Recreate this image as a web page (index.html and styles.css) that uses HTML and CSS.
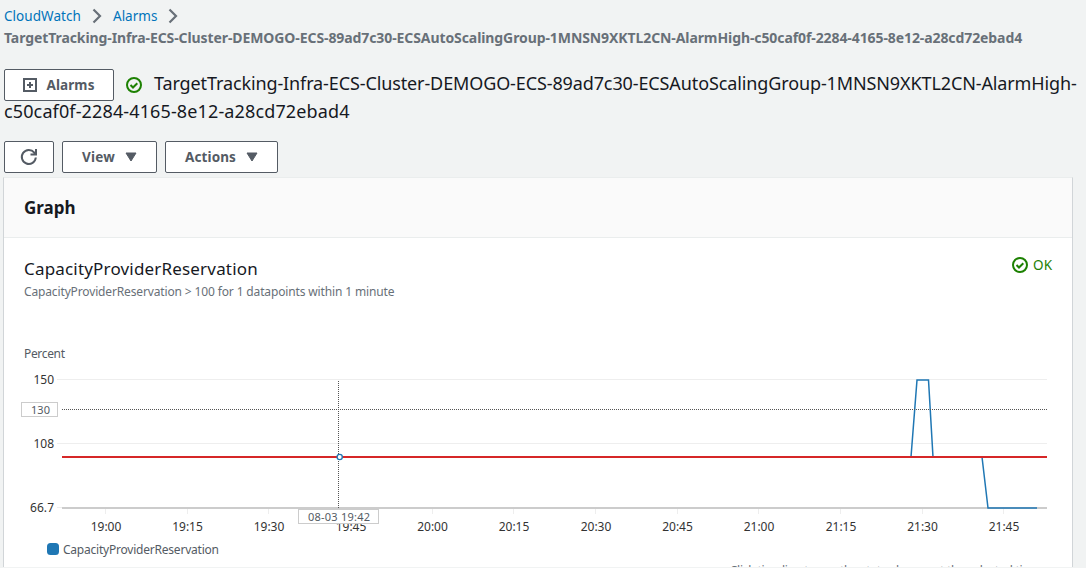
FILE: index.html
```html
<!DOCTYPE html>
<html lang="en">
<head>
<meta charset="utf-8">
<title>CloudWatch Alarms</title>
<link rel="stylesheet" href="styles.css">
</head>
<body>
<main class="page">
  <nav class="breadcrumb">
    <div class="crumbs">
      <a class="crumb crumb-service">CloudWatch</a>
      <svg class="chevron" width="10" height="16" viewBox="0 0 10 16"><path d="M1.500 1.500 8 8l-6.500 6.500"/></svg>
      <a class="crumb crumb-alarms">Alarms</a>
      <svg class="chevron" width="10" height="16" viewBox="0 0 10 16"><path d="M1.500 1.500 8 8l-6.500 6.500"/></svg>
    </div>
    <div><span class="current">TargetTracking-Infra-ECS-Cluster-DEMOGO-ECS-89ad7c30-ECSAutoScalingGroup-1MNSN9XKTL2CN-AlarmHigh-c50caf0f-2284-4165-8e12-a28cd72ebad4</span></div>
  </nav>

  <header class="heading">
    <div class="heading-row">
      <button class="button alarms-button">
        <svg width="14" height="14" viewBox="0 0 14 14"><path class="stroke" d="M1 1h12v12H1zM7 4v6M4 7h6"/></svg>
        <span class="label-alarms">Alarms</span>
      </button>
      <svg class="ok-icon" width="16" height="16" viewBox="0 0 16 16"><circle cx="8" cy="8" r="7"/><path d="m4.500 8 2.500 2.500 4.300-4.300"/></svg>
      <span class="title title-first">TargetTracking-Infra-ECS-Cluster-DEMOGO-ECS-89ad7c30-ECSAutoScalingGroup-1MNSN9XKTL2CN-AlarmHigh-</span>
    </div>
    <div class="heading-rest"><span class="title title-rest">c50caf0f-2284-4165-8e12-a28cd72ebad4</span></div>
  </header>

  <div class="toolbar">
    <button class="button refresh">
      <svg width="18" height="18" viewBox="0 0 18 18"><path class="stroke" d="M15.800 9.500A7 7 0 1 1 14.300 4.600L15.600 6M16 1v5.500h-5.500"/></svg>
    </button>
    <button class="button view"><span class="label-view">View</span><svg width="12" height="10" viewBox="0 0 12 10"><path class="caret" d="M1 1h10L6 9z"/></svg></button>
    <button class="button actions"><span class="label-actions">Actions</span><svg width="12" height="10" viewBox="0 0 12 10"><path class="caret" d="M1 1h10L6 9z"/></svg></button>
  </div>

  <section class="panel">
    <div class="panel-header"><h2 class="panel-title">Graph</h2></div>
    <div class="panel-body">
      <div class="metric">
        <div>
          <div class="metric-name"><span>CapacityProviderReservation</span></div>
          <div class="metric-rule"><span>CapacityProviderReservation &gt; 100 for 1 datapoints within 1 minute</span></div>
        </div>
        <div class="status">
          <svg class="ok-icon" width="16" height="16" viewBox="0 0 16 16"><circle cx="8" cy="8" r="7"/><path d="m4.500 8 2.500 2.500 4.300-4.300"/></svg>
          <span>OK</span>
        </div>
      </div>
      <svg class="chart" width="1068" height="222" viewBox="4 340 1068 222">
        <text class="unit" x="24" y="358" textLength="41">Percent</text>
        <path class="grid" d="M57 379.500H1047M57 443.500H1047M57 507.500H62"/>
        <path class="grid" d="M105.500 509v5M187.500 509v5M268.500 509v5M350.500 509v5M432.500 509v5M513.500 509v5M595.500 509v5M677.500 509v5M758.500 509v5M840.500 509v5M922.500 509v5M1003.500 509v5"/>
        <path class="axis" d="M62 508H1047"/>
        <g class="tick tick-y">
          <text x="54" y="384" textLength="20.500">150</text>
          <text x="54" y="448" textLength="20.500">108</text>
          <text x="54" y="512" textLength="24">66.7</text>
        </g>
        <g class="tick tick-x">
          <text x="106" y="531" textLength="30.500">19:00</text>
          <text x="187.500" y="531" textLength="30.500">19:15</text>
          <text x="269" y="531" textLength="30.500">19:30</text>
          <text x="351" y="531" textLength="30.500">19:45</text>
          <text x="432.500" y="531" textLength="30.500">20:00</text>
          <text x="514" y="531" textLength="30.500">20:15</text>
          <text x="596" y="531" textLength="30.500">20:30</text>
          <text x="677.500" y="531" textLength="30.500">20:45</text>
          <text x="759" y="531" textLength="30.500">21:00</text>
          <text x="841" y="531" textLength="30.500">21:15</text>
          <text x="922.500" y="531" textLength="30.500">21:30</text>
          <text x="1004" y="531" textLength="30.500">21:45</text>
        </g>
        <path class="series" d="M62 457H911L917 380H928.500L933 457H982L988 508H1037"/>
        <path class="threshold" d="M62 457H1047"/>
        <path class="cursor" d="M62 409.500H1047M338.500 381V508"/>
        <circle class="point" cx="339.700" cy="457" r="2.600"/>
        <rect class="tag" x="21.500" y="402.500" width="36" height="14"/>
        <text class="tag-text" x="40.500" y="414" textLength="19">130</text>
        <rect class="tag" x="298.500" y="509.500" width="80" height="14"/>
        <text class="tag-text" x="339" y="521" textLength="62">08-03 19:42</text>
        <rect class="legend-mark" x="47" y="543" width="12" height="12" rx="3.500"/>
        <text class="unit" x="63" y="554" textLength="156">CapacityProviderReservation</text>
      </svg>
      <div class="hint"><span>Click timeline to see the state change at the selected time.</span></div>
    </div>
  </section>
</main>
</body>
</html>
```
FILE: styles.css
```css
* { box-sizing: border-box; }
html { background: #f1f3f3; }
body {
  margin: 0;
  height: 567px;
  overflow: hidden;
  font-family: "Noto Sans", "Open Sans", sans-serif;
  color: #16191f;
  background: #f1f3f3;
}
.page { width: 1086px; height: 567px; overflow: hidden; padding-top: 5px; }
.breadcrumb { height: 64px; padding-left: 4px; font-size: 14px; line-height: 22px; white-space: nowrap; }
.crumbs { display: flex; align-items: center; height: 22px; }
.crumb { color: #0073bb; font-size: 13.500px; }
.crumb-service { width: 77px; letter-spacing: 0.050px; }
.crumb-alarms { width: 44px; }
.chevron { margin: 0 11px; fill: none; stroke: #687078; stroke-width: 2.200; }
.current { color: #687078; font-size: 14px; font-weight: 700; letter-spacing: -0.090px; }
.heading { height: 72px; padding-left: 4px; white-space: nowrap; }
.heading-row { display: flex; align-items: center; height: 32px; }
.heading-rest { height: 28px; line-height: 28px; margin-top: -4px; }
.title { font-size: 18px; line-height: 28px; }
.title-first { margin: -5px 0 0 12px; letter-spacing: -0.115px; }
.title-rest { letter-spacing: 0.130px; }
.button {
  display: flex;
  flex-shrink: 0;
  align-items: center;
  justify-content: center;
  height: 32px;
  padding: 0;
  border: 1px solid #545b64;
  border-radius: 2px;
  background: #fff;
  color: #545b64;
  font: 700 13.500px/20px "Noto Sans", "Open Sans", sans-serif;
}
.stroke { fill: none; stroke: #545b64; stroke-width: 2; }
.caret { fill: #545b64; stroke: #545b64; stroke-linejoin: round; }
.alarms-button { width: 110px; gap: 9px; margin-right: 12px; }
.label-alarms { letter-spacing: 0.100px; }
.label-view { letter-spacing: 0.200px; }
.label-actions { letter-spacing: 0.100px; }
.ok-icon { flex-shrink: 0; fill: none; stroke: #1d8102; stroke-width: 2; }
.toolbar { display: flex; gap: 8px; height: 36px; padding-left: 4px; }
.refresh { width: 50px; }
.view { width: 95px; gap: 10px; }
.actions { width: 113px; gap: 10px; }
.panel {
  width: 1070px;
  height: 400px;
  margin-left: 3px;
  border: 1px solid #d1d5d8;
  border-top-color: #eaeded;
  background: #fff;
}
.panel-header { display: flex; align-items: center; height: 60px; padding-left: 20px; background: #fafafa; border-bottom: 1px solid #eaeded; }
.panel-title { margin: 0; font-size: 17px; line-height: 24px; }
.metric { display: flex; justify-content: space-between; height: 102px; padding: 19px 20px 0; white-space: nowrap; }
.metric-name { height: 25px; font-size: 17px; line-height: 24px; letter-spacing: 0.180px; }
.metric-rule { height: 20px; color: #687078; font-size: 12px; line-height: 20px; letter-spacing: -0.140px; }
.status { display: flex; align-items: center; gap: 5px; height: 16px; color: #1d8102; font-size: 13.500px; line-height: 16px; }
.chart { display: block; font-family: "Noto Sans", "Open Sans", sans-serif; }
.unit { font-size: 12px; fill: #545b64; }
.tick { font-size: 12px; fill: #333; }
.tick-y { text-anchor: end; }
.tick-x { text-anchor: middle; }
.grid { fill: none; stroke: #eee; }
.axis { stroke: #ccc; stroke-width: 2; }
.series { fill: none; stroke: #1f77b4; stroke-width: 1.500; }
.threshold { stroke: #d62728; stroke-width: 2; }
.cursor { fill: none; stroke: #545454; stroke-dasharray: 1 1; }
.point { fill: #fff; stroke: #1f77b4; stroke-width: 1.300; }
.tag { fill: #fff; stroke: #ccc; }
.tag-text { font-size: 11px; fill: #545b64; text-anchor: middle; }
.legend-mark { fill: #1f77b4; }
.hint { height: 20px; padding-right: 29px; text-align: right; color: #687078; font-size: 12px; line-height: 18px; letter-spacing: -0.220px; }
```
